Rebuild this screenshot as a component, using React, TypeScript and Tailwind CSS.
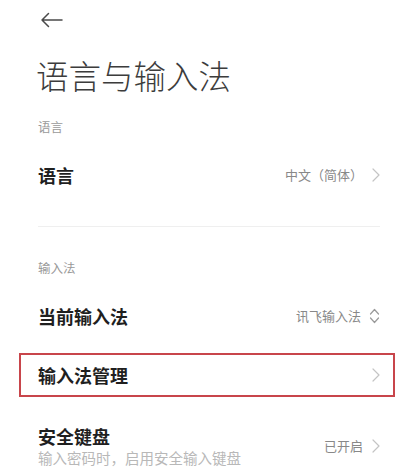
import React from "react";

const Chevron = () => (
  <svg width="8" height="14" viewBox="0 0 8 14" fill="none" className="shrink-0">
    <path d="M1 1l6 6-6 6" stroke="#c4c4c4" strokeWidth="1.2" strokeLinecap="round" strokeLinejoin="round" />
  </svg>
);

const UpDown = () => (
  <svg width="11" height="16" viewBox="0 0 11 16" fill="none" className="shrink-0">
    <path d="M1.5 6l4-4.5 4 4.5" stroke="#9a9a9a" strokeWidth="1.2" strokeLinecap="round" strokeLinejoin="round" />
    <path d="M1.5 10l4 4.5 4-4.5" stroke="#9a9a9a" strokeWidth="1.2" strokeLinecap="round" strokeLinejoin="round" />
  </svg>
);

export default function App() {
  return (
    <div
      className="relative w-[405px] h-[476px] overflow-hidden bg-white"
      style={{ fontFamily: '"Noto Sans CJK SC", "Noto Sans", sans-serif' }}
    >
      <div className="h-[40px] flex items-center pl-[40px]">
        <svg width="23" height="16" viewBox="0 0 23 16" fill="none">
          <path d="M22 8H2M8.5 1.5L2 8l6.5 6.5" stroke="#4a4a4a" strokeWidth="1.5" strokeLinecap="round" strokeLinejoin="round" />
        </svg>
      </div>
      <div className="pl-[36px] pr-[25px]">
        <div className="mt-[15px] h-[40px] leading-[40px] text-[32.5px] font-light text-[#3c3c3c]">语言与输入法</div>
        <div className="mt-[22px] h-[20px] leading-[20px] text-[12.5px] text-[#9a9a9a] pl-[2px]">语言</div>
        <div className="mt-[10px] h-[56px] flex items-center justify-between pl-[2px]">
          <span className="text-[18px] font-semibold text-[#1f1f1f]">语言</span>
          <span className="flex items-center gap-[9px]">
            <span className="text-[13px] text-[#888]">中文（简体）</span>
            <Chevron />
          </span>
        </div>
        <div className="mt-[23px] h-px bg-[#efefef] ml-[2px]" />
        <div className="mt-[31px] h-[20px] leading-[20px] text-[12.5px] text-[#9a9a9a] pl-[2px]">输入法</div>
        <div className="mt-[10px] h-[56px] flex items-center justify-between pl-[2px]">
          <span className="text-[18px] font-semibold text-[#1f1f1f]">当前输入法</span>
          <span className="flex items-center gap-[8px]">
            <span className="text-[13px] text-[#888]">讯飞输入法</span>
            <UpDown />
          </span>
        </div>
      </div>
      <div className="mt-[9px] ml-[19px] mr-[10px] h-[44px] border-2 border-[#c8454b] flex items-center justify-between pl-[17px] pr-[13px]">
        <span className="text-[18px] font-semibold text-[#1f1f1f]">输入法管理</span>
        <Chevron />
      </div>
      <div className="mt-[27px] pl-[38px] pr-[25px] flex items-center justify-between">
        <div className="flex flex-col">
          <span className="h-[24px] leading-[24px] text-[18px] font-semibold text-[#1f1f1f]">安全键盘</span>
          <span className="h-[20px] leading-[20px] text-[14.5px] text-[#b8b8b8]">输入密码时，启用安全输入键盘</span>
        </div>
        <span className="flex items-center gap-[9px]">
          <span className="text-[13px] text-[#888]">已开启</span>
          <Chevron />
        </span>
      </div>
    </div>
  );
}
